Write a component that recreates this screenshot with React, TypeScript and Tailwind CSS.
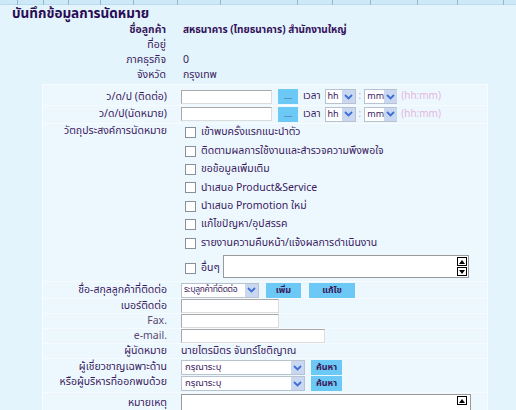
import React from "react";

const F = { fontFamily: "Tahoma, 'Noto Sans Thai', 'Noto Sans', 'DejaVu Sans', sans-serif" };

function Chevron() {
  return (
    <svg width="9" height="6" viewBox="0 0 9 6">
      <path d="M1 1 L4.5 4.5 L8 1" fill="none" stroke="#3b6fd6" strokeWidth="1.8" />
    </svg>
  );
}

function Select({ w, text, tc = "pl-[3px] text-[9.5px]" }: { w: string; text: string; tc?: string }) {
  return (
    <div className={`${w} h-[15px] bg-white border border-[#b9c3cf] flex items-center justify-between`}>
      <span className={`${tc} leading-none text-[#3a1a5e] whitespace-nowrap`}>{text}</span>
      <span className="w-[13px] h-[13px] bg-[#c9d7f0] flex items-center justify-center shrink-0">
        <Chevron />
      </span>
    </div>
  );
}

function BlueBtn({ w, text }: { w: string; text: string }) {
  return (
    <div className={`${w} h-[15px] bg-[#6cc8f4] flex items-center justify-center text-[9px] font-bold leading-none text-[#3a1a5e]`}>
      {text}
    </div>
  );
}

function Input({ w }: { w: string }) {
  return <div className={`${w} h-[14px] bg-white border border-[#a9a9a9] border-b-[#dcdcdc] border-r-[#dcdcdc]`} />;
}

function Check({ label }: { label: string }) {
  return (
    <div className="h-[18.4px] flex items-center">
      <span className="w-[11px] h-[11px] bg-white border border-[#8a8f96] mr-[5px] shrink-0" />
      <span className="text-[10.5px] text-[#3a1a5e] leading-none whitespace-nowrap">{label}</span>
    </div>
  );
}

function TimeRow() {
  return (
    <div className="flex items-center">
      <Input w="w-[91px]" />
      <div className="ml-[6px] w-[20px] h-[15px] bg-[#6cc8f4] flex items-end justify-center pb-[3px] text-[6px] leading-none text-[#3a1a5e]">.....</div>
      <span className="ml-[5px] text-[10px] text-[#3a1a5e]">เวลา</span>
      <div className="ml-[4px]"><Select w="w-[31px]" text="hh" tc="pl-[2px] text-[9px]" /></div>
      <span className="mx-[3px] text-[10px] text-[#c9a3c8]">:</span>
      <Select w="w-[33px]" text="mm" tc="pl-[2px] text-[9px]" />
      <span className="ml-[4px] text-[10px] text-[#e3b6de]">(hh:mm)</span>
    </div>
  );
}

function Row({ label, children, h = "h-[17px]" }: { label: React.ReactNode; children?: React.ReactNode; h?: string }) {
  return (
    <div className={`grid grid-cols-[130px_1fr] ${h} border-b border-[#f6fbff]`}>
      <div className="pr-[6px] text-right text-[10.5px] text-[#3a1a5e] flex items-center justify-end leading-none whitespace-nowrap">
        {label}
      </div>
      <div className="pl-[8px] flex items-center">{children}</div>
    </div>
  );
}

function UpBtn() {
  return (
    <div className="w-[10px] h-[9px] border border-black bg-white flex items-center justify-center">
      <svg width="6" height="4" viewBox="0 0 6 4"><path d="M0 4 L3 0 L6 4Z" fill="#000" /></svg>
    </div>
  );
}

function DownBtn() {
  return (
    <div className="w-[10px] h-[9px] border border-black bg-white flex items-center justify-center">
      <svg width="6" height="4" viewBox="0 0 6 4"><path d="M0 0 L3 4 L6 0Z" fill="#000" /></svg>
    </div>
  );
}

export default function App() {
  const ticks = [17, 43, 68, 100, 133, 177, 220, 297, 332, 370, 417, 457, 503];
  return (
    <div className="w-[516px] h-[410px] overflow-hidden bg-[#e3f4fc]" style={F}>
      <div className="h-[5px] bg-[#cde8f6] border-b border-[#bcdcef] relative">
        {ticks.map((x) => (
          <span key={x} className="absolute top-0 w-px h-[5px] bg-[#8fb8d3]" style={{ left: x }} />
        ))}
      </div>
      <div className="pl-[12px] pt-[2px] h-[18px] text-[13.5px] font-bold text-[#2a0c55] leading-[14px] whitespace-nowrap">บันทึกข้อมูลการนัดหมาย</div>

      <div className="grid grid-cols-[166px_1fr] text-[10.5px] text-[#3a1a5e] leading-[15px]">
        <div className="text-right font-bold">ชื่อลูกค้า</div>
        <div className="pl-[17px] font-bold text-[#33105a] text-[10px]">สหธนาคาร (ไทยธนาคาร) สำนักงานใหญ่</div>
        <div className="text-right">ที่อยู่</div>
        <div className="pl-[17px]"></div>
        <div className="text-right">ภาคธุรกิจ</div>
        <div className="pl-[17px]">0</div>
        <div className="text-right">จังหวัด</div>
        <div className="pl-[17px]">กรุงเทพ</div>
      </div>

      <div className="ml-[42px] mt-[1px] w-[446px] bg-[#edf8fe] border border-[#f7fcff]">
        <div className="h-[3.5px]" />
        <Row label="ว/ด/ป (ติดต่อ)" h="h-[17.5px]"><TimeRow /></Row>
        <Row label="ว/ด/ป(นัดหมาย)" h="h-[17.5px]"><TimeRow /></Row>
        <div className="grid grid-cols-[130px_1fr] border-b border-[#f6fbff]">
          <div className="pr-[6px] pt-[2px] text-right text-[10.5px] text-[#3a1a5e] leading-none whitespace-nowrap">วัตถุประสงค์การนัดหมาย</div>
          <div className="pl-[12px] pb-[3px]">
            <Check label="เข้าพบครั้งแรกแนะนำตัว" />
            <Check label="ติดตามผลการใช้งานและสำรวจความพึงพอใจ" />
            <Check label="ขอข้อมูลเพิ่มเติม" />
            <Check label="นำเสนอ Product&Service" />
            <Check label="นำเสนอ Promotion ใหม่" />
            <Check label="แก้ไขปัญหา/อุปสรรค" />
            <Check label="รายงานความคืบหน้า/แจ้งผลการดำเนินงาน" />
            <div className="flex items-center mt-[3px]">
              <span className="w-[11px] h-[11px] bg-white border border-[#8a8f96] mr-[5px] shrink-0 mt-[4px]" />
              <span className="text-[10.5px] text-[#3a1a5e] leading-none mt-[4px]">อื่นๆ</span>
              <div className="ml-[3px] w-[246px] h-[23px] bg-white border border-[#9a9a9a] flex justify-end items-start pt-[1px] pr-[1px]">
                <div className="flex flex-col gap-[1px]">
                  <UpBtn />
                  <DownBtn />
                </div>
              </div>
            </div>
          </div>
        </div>
        <Row label="ชื่อ-สกุลลูกค้าที่ติดต่อ">
          <Select w="w-[78px]" text="ระบุลูกค้าที่ติดต่อ" tc="pl-[2px] text-[8.5px] tracking-[-0.3px]" />
          <div className="ml-[7px]"><BlueBtn w="w-[35px]" text="เพิ่ม" /></div>
          <div className="ml-[8px]"><BlueBtn w="w-[46px]" text="แก้ไข" /></div>
        </Row>
        <Row label="เบอร์ติดต่อ" h="h-[15px]"><Input w="w-[98px]" /></Row>
        <Row label={<span className="text-[10.5px] text-[#5a4a70]">Fax.</span>} h="h-[15px]"><Input w="w-[98px]" /></Row>
        <Row label={<span className="text-[10.5px] text-[#5a4a70]">e-mail.</span>} h="h-[15px]"><Input w="w-[144px]" /></Row>
        <Row label="ผู้นัดหมาย" h="h-[15px]">
          <span className="text-[10.5px] text-[#3a1a5e] leading-none">นายไตรมิตร จันทร์โชติญาณ</span>
        </Row>
        <div className="grid grid-cols-[130px_1fr] border-b border-[#f6fbff]">
          <div className="pr-[6px] pt-[1px] text-right text-[10.5px] text-[#3a1a5e] leading-[15px] whitespace-nowrap">
            <div>ผู้เชี่ยวชาญเฉพาะด้าน</div>
            <div>หรือผู้บริหารที่ออกพบด้วย</div>
          </div>
          <div className="pl-[8px] flex flex-col gap-[1px] py-[1px]">
            <div className="flex items-center">
              <Select w="w-[124px]" text="กรุณาระบุ" />
              <div className="ml-[6px]"><BlueBtn w="w-[31px]" text="ค้นหา" /></div>
            </div>
            <div className="flex items-center">
              <Select w="w-[124px]" text="กรุณาระบุ" />
              <div className="ml-[6px]"><BlueBtn w="w-[31px]" text="ค้นหา" /></div>
            </div>
          </div>
        </div>
        <div className="grid grid-cols-[130px_1fr]">
          <div className="pr-[6px] pt-[5px] text-right text-[10.5px] text-[#3a1a5e] leading-none">หมายเหตุ</div>
          <div className="pl-[8px] pt-[1px]">
            <div className="w-[290px] h-[30px] bg-white border border-[#9a9a9a] flex justify-end items-start pt-[1px] pr-[3px]">
              <UpBtn />
            </div>
          </div>
        </div>
      </div>
    </div>
  );
}
